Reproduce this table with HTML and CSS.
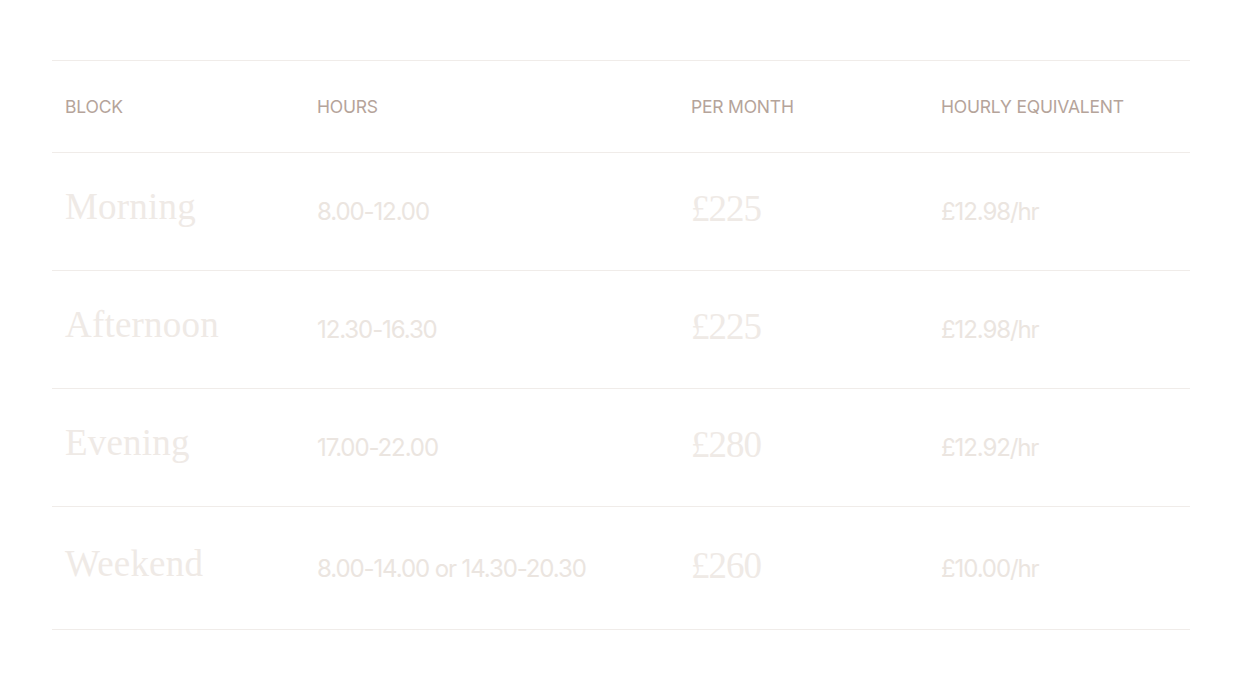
FILE: index.html
```html
<!DOCTYPE html>
<html lang="en">
<head>
<meta charset="utf-8">
<title>Pricing</title>
<link rel="stylesheet" href="styles.css">
</head>
<body>
<main class="page">
  <table class="pricing">
    <colgroup>
      <col class="c-block">
      <col class="c-hours">
      <col class="c-month">
      <col class="c-hourly">
    </colgroup>
    <thead>
      <tr class="head-row">
        <th>Block</th>
        <th>Hours</th>
        <th>Per month</th>
        <th>Hourly equivalent</th>
      </tr>
    </thead>
    <tbody>
      <tr class="row">
        <td class="name"><span class="lift">Morning</span></td>
        <td class="plain">8.00-12.00</td>
        <td class="price"><span class="lift-sm">£225</span></td>
        <td class="plain">£12.98/hr</td>
      </tr>
      <tr class="row">
        <td class="name"><span class="lift">Afternoon</span></td>
        <td class="plain">12.30-16.30</td>
        <td class="price"><span class="lift-sm">£225</span></td>
        <td class="plain">£12.98/hr</td>
      </tr>
      <tr class="row">
        <td class="name"><span class="lift">Evening</span></td>
        <td class="plain">17.00-22.00</td>
        <td class="price"><span class="lift-sm">£280</span></td>
        <td class="plain">£12.92/hr</td>
      </tr>
      <tr class="row row-last">
        <td class="name"><span class="lift">Weekend</span></td>
        <td class="plain">8.00-14.00 or 14.30-20.30</td>
        <td class="price"><span class="lift-sm">£260</span></td>
        <td class="plain">£10.00/hr</td>
      </tr>
    </tbody>
  </table>
</main>
</body>
</html>
```
FILE: styles.css
```css
html, body {
  margin: 0;
  padding: 0;
  background: #ffffff;
}

.page {
  padding: 60px 70px 0 52px;
}

.pricing {
  width: 1138px;
  border-collapse: collapse;
  table-layout: fixed;
  font-family: Inter, "Liberation Sans", sans-serif;
}

.c-block { width: 252px; }
.c-hours { width: 374px; }
.c-month { width: 250px; }
.c-hourly { width: 262px; }

.pricing th,
.pricing td {
  padding: 0 0 0 13px;
  text-align: left;
  vertical-align: middle;
  border-top: 1px solid #f0ece9;
}

.head-row th {
  height: 91px;
  font-weight: 400;
  font-size: 17.5px;
  letter-spacing: -0.2px;
  text-transform: uppercase;
  color: #b5a49a;
}

.row td {
  height: 117px;
}

.row-last td {
  height: 122px;
  border-bottom: 1px solid #f0ece9;
}

.plain {
  font-size: 24px;
  letter-spacing: -1.1px;
  color: #ebe5e0;
}

.name {
  font-family: "Liberation Serif", "DejaVu Serif", serif;
  font-size: 37px;
  font-weight: 400;
  letter-spacing: 0.2px;
  color: #efeae6;
}

.price {
  font-family: "Liberation Serif", "DejaVu Serif", serif;
  font-size: 37px;
  letter-spacing: -1px;
  color: #efeae6;
}

.lift {
  display: inline-block;
  margin-bottom: 10px;
}

.lift-sm {
  display: inline-block;
  margin-bottom: 6px;
}
```
